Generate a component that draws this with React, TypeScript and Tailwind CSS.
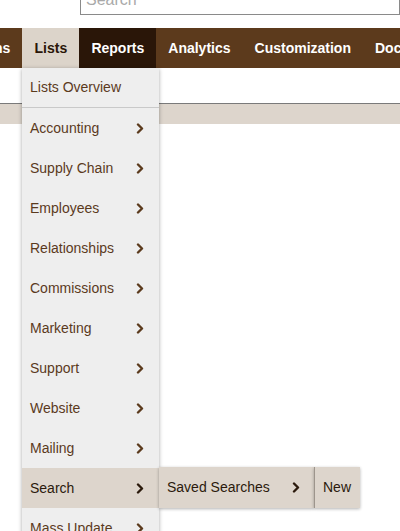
const items = [
  'Accounting',
  'Supply Chain',
  'Employees',
  'Relationships',
  'Commissions',
  'Marketing',
  'Support',
  'Website',
  'Mailing',
  'Search',
  'Mass Update',
]

const tabs = ['Transactions', 'Lists', 'Reports', 'Analytics', 'Customization', 'Documents', 'Setup']

function Chevron({ dark }: { dark?: boolean }) {
  return (
    <svg
      width="8"
      height="11"
      viewBox="0 0 8 11"
      fill="none"
      stroke="currentColor"
      strokeWidth="2.4"
      strokeLinecap="round"
      strokeLinejoin="round"
      className={dark ? 'text-[#2b1a0c]' : 'text-[#5b3a1d]'}
    >
      <polyline points="2,1.5 6,5.5 2,9.5" />
    </svg>
  )
}

export default function App() {
  return (
    <div className="relative h-[531px] w-[400px] overflow-hidden bg-white font-['Liberation_Sans',Arial,sans-serif]">
      {/* search */}
      <div className="h-[28px] overflow-hidden">
        <div className="ml-[80px] -mt-[16px] h-[31px] border border-[#8a8a8a] bg-white pl-[5px] text-[16px] leading-[29px] text-[#a9a9a9]">
          Search
        </div>
      </div>

      {/* nav */}
      <div className="flex h-[40px] bg-[#5c3a1c] overflow-hidden">
        <div className="flex -ml-[88px] shrink-0">
          {tabs.map(t => (
            <div
              key={t}
              className={
                'flex h-[40px] shrink-0 items-center text-[14px] font-bold ' +
                (t === 'Lists'
                  ? 'w-[57px] justify-center bg-[#dcd4ca] text-[#2a1608]'
                  : t === 'Reports'
                  ? 'px-[12px] bg-[#2a1608] text-white'
                  : 'px-[12px] text-white')
              }
            >
              {t}
            </div>
          ))}
        </div>
      </div>

      <div className="h-[36px] border-b border-[#7a7a7a]" />
      <div className="h-[20px] bg-[#ddd5cc]" />

      {/* Lists dropdown */}
      <div className="absolute left-[22px] top-[68px] w-[137px] bg-[#eeeeee] shadow-[0_1px_4px_rgba(0,0,0,0.35)]">
        <div className="flex h-[40px] items-center border-b border-[#c9c9c9] pl-[8px] text-[14px] text-[#5b3a1d]">
          Lists Overview
        </div>
        {items.map(it => {
          const active = it === 'Search'
          return (
            <div
              key={it}
              className={
                'relative flex h-[40px] items-center justify-between pl-[8px] pr-[15px] text-[14px] ' +
                (active ? 'bg-[#ddd5cc] text-[#2b1a0c]' : 'text-[#5b3a1d]')
              }
            >
              <span>{it}</span>
              <Chevron dark={active} />
              {active && (
                <div className="absolute left-[137px] top-[-1px] flex h-[41px]">
                  <div className="flex w-[155px] items-center justify-between bg-[#ddd5cc] pl-[8px] pr-[14px] text-[14px] text-[#2b1a0c] shadow-[0_1px_3px_rgba(0,0,0,0.3)]">
                    <span>Saved Searches</span>
                    <Chevron dark />
                  </div>
                  <div className="flex w-[46px] items-center border-l border-[#9d958c] bg-[#ddd5cc] pl-[8px] text-[14px] text-[#2b1a0c] shadow-[0_1px_3px_rgba(0,0,0,0.3)]">
                    New
                  </div>
                </div>
              )}
            </div>
          )
        })}
      </div>
    </div>
  )
}
